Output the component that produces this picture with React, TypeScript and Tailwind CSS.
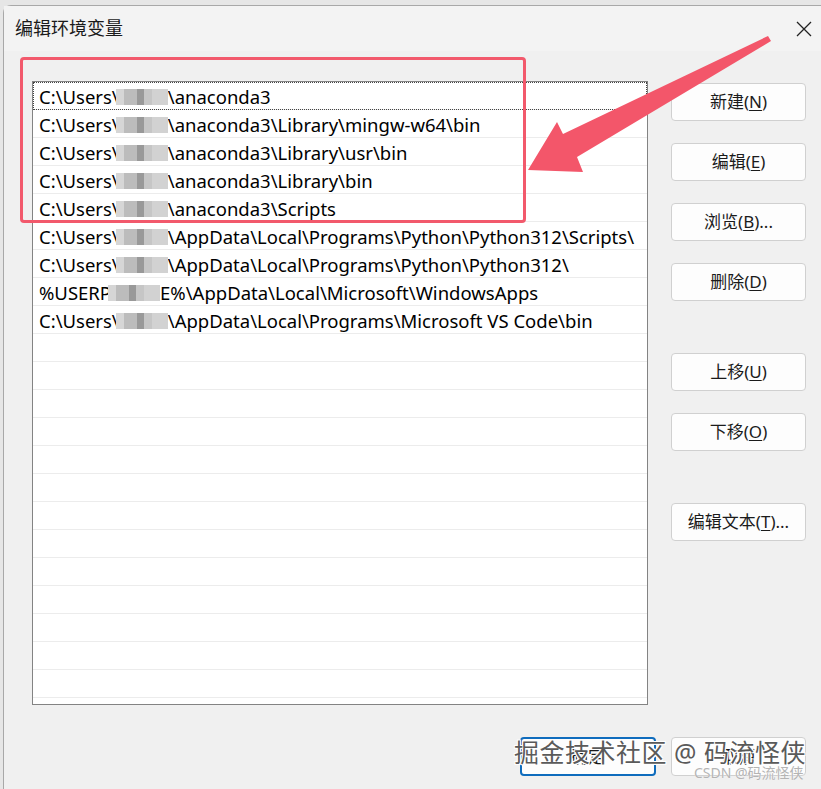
import React from 'react';

const rows = [
  { pre: 'C:\\Users\\', post: '\\anaconda3' },
  { pre: 'C:\\Users\\', post: '\\anaconda3\\Library\\mingw-w64\\bin' },
  { pre: 'C:\\Users\\', post: '\\anaconda3\\Library\\usr\\bin' },
  { pre: 'C:\\Users\\', post: '\\anaconda3\\Library\\bin' },
  { pre: 'C:\\Users\\', post: '\\anaconda3\\Scripts' },
  { pre: 'C:\\Users\\', post: '\\AppData\\Local\\Programs\\Python\\Python312\\Scripts\\' },
  { pre: 'C:\\Users\\', post: '\\AppData\\Local\\Programs\\Python\\Python312\\' },
  { pre: '%USERP', post: 'E%\\AppData\\Local\\Microsoft\\WindowsApps' },
  { pre: 'C:\\Users\\', post: '\\AppData\\Local\\Programs\\Microsoft VS Code\\bin' },
];

const font = "font-['Noto_Sans','Noto_Sans_CJK_SC',sans-serif]";

function Blur() {
  // pixelated username mask
  return (
    <span className="relative z-10 -ml-[3px] inline-flex h-[16px] w-[52px] shrink-0 items-stretch bg-white blur-[0.6px]">
      <span className="w-[8px] bg-[#d6d6d6]" />
      <span className="w-[13px] bg-[#bcbcbc]" />
      <span className="w-[7px] bg-[#999999]" />
      <span className="w-[8px] bg-[#c6c6c6]" />
      <span className="w-[16px] bg-[#d2d2d2]" />
    </span>
  );
}

function SideButton({ label, k, suffix = '' }: { label: string; k: string; suffix?: string }) {
  return (
    <button className="flex h-[38px] w-[135px] items-center justify-center rounded-[4px] border border-[#d0d0d0] bg-[#fdfdfd] text-[17px] text-[#1b1b1b]">
      {label}(<span className="underline underline-offset-2">{k}</span>){suffix}
    </button>
  );
}

export default function App() {
  const empty = Array.from({ length: 13 });
  return (
    <div className={`relative h-[789px] w-[821px] overflow-hidden bg-[#e6e6e6] pl-[3px] pt-[5px] ${font}`}>
      <div className="flex h-[784px] flex-col rounded-tl-[8px] border-l border-t border-[#a8a8a8] bg-[#f0f0f0]">
        <div className="flex h-[45px] items-center justify-between bg-[#f3f3f3] pl-[11px] pr-[9px]">
          <span className="text-[18px] text-[#1a1a1a]">编辑环境变量</span>
          <svg width="16" height="16" viewBox="0 0 16 16" className="text-[#222]">
            <path d="M1 1 15 15M15 1 1 15" stroke="currentColor" strokeWidth="1.3" />
          </svg>
        </div>

        <div className="flex pl-[28px] pt-[30px]">
          <div className="h-[624px] w-[616px] border border-[#838383] bg-white">
            {rows.map((r, i) => (
              <div
                key={i}
                className={`flex h-[28px] items-center overflow-hidden border-b border-[#ececec] pl-[6px] pt-[2px] text-[18.5px] whitespace-nowrap text-black ${
                  i === 0 ? 'outline outline-1 -outline-offset-1 outline-dotted outline-[#444]' : ''
                }`}
              >
                <span>{r.pre}</span>
                <Blur />
                <span>{r.post}</span>
              </div>
            ))}
            {empty.map((_, i) => (
              <div key={i} className="h-[28px] border-b border-[#ececec]" />
            ))}
          </div>

          <div className="ml-[23px] mt-[2px] flex flex-col">
            <SideButton label="新建" k="N" />
            <div className="h-[22px]" />
            <SideButton label="编辑" k="E" />
            <div className="h-[22px]" />
            <SideButton label="浏览" k="B" suffix="..." />
            <div className="h-[22px]" />
            <SideButton label="删除" k="D" />
            <div className="h-[52px]" />
            <SideButton label="上移" k="U" />
            <div className="h-[22px]" />
            <SideButton label="下移" k="O" />
            <div className="h-[52px]" />
            <SideButton label="编辑文本" k="T" suffix="..." />
          </div>
        </div>

        <div className="mt-[32px] flex justify-end gap-[15px] pr-[15px]">
          <button className="h-[39px] w-[136px] rounded-[4px] border-2 border-[#0f6cbd] bg-[#fdfdfd] text-[17px] text-[#1b1b1b]">
            确定
          </button>
          <button className="h-[39px] w-[135px] rounded-[4px] border border-[#d0d0d0] bg-[#fdfdfd] text-[17px] text-[#1b1b1b]">
            取消
          </button>
        </div>
      </div>

      {/* annotation overlays */}
      <div className="absolute left-[20px] top-[57px] h-[166px] w-[506px] rounded-[4px] border-[3px] border-[#f2596c]" />
      <svg className="pointer-events-none absolute left-0 top-0" width="821" height="789">
        <polygon
          points="768,36 563,134 557,122 528,170 583,172 577,157 771,41"
          fill="#f3566a"
        />
      </svg>

      <div className="absolute left-[514px] top-[734px] text-[25px] tracking-[0.5px] text-[#5a5a5a] [text-shadow:1px_1px_0_#fff,-1px_-1px_0_#fff,1px_-1px_0_#fff,-1px_1px_0_#fff]">
        掘金技术社区 @ 码流怪侠
      </div>
      <div className="absolute left-[694px] top-[762px] text-[14px] text-[#b4b4b4] [text-shadow:0_0_1px_#fff]">
        CSDN @码流怪侠
      </div>
    </div>
  );
}
